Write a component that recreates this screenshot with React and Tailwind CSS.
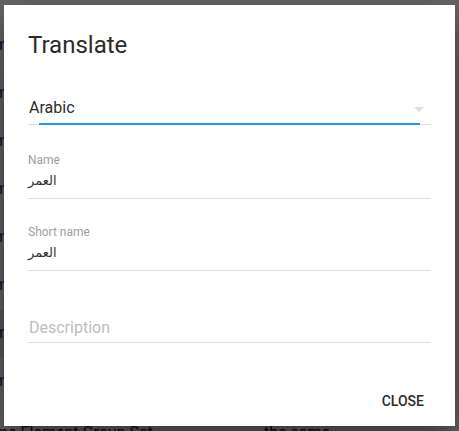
import React from "react";

const rows = [45, 93, 141, 189, 237, 285, 333, 381];

function Field({ label, value }) {
  return (
    <div className="flex flex-col">
      <div className="h-4 text-[12px] leading-4 text-[#9e9e9e]">{label}</div>
      <div
        className="mt-[1px] h-6 text-[13px] leading-6 text-[#333333]"
        dir="rtl"
        style={{ textAlign: "left" }}
      >
        <span style={{ fontFamily: '"DejaVu Sans", "Noto Sans", sans-serif' }}>{value}</span>
      </div>
      <div className="mt-[5px] h-px bg-[#e0e0e0]" />
    </div>
  );
}

export default function App() {
  return (
    <div
      className="relative w-[459px] h-[431px] overflow-hidden bg-white"
      style={{ fontFamily: 'Roboto, "Liberation Sans", sans-serif' }}
    >
      {/* background page */}
      <div className="absolute inset-0">
        {rows.map((y) => (
          <div
            key={y}
            className="absolute left-[-6px] text-[16px] leading-6 text-[#1a237e]"
            style={{ top: y - 12 }}
          >
            me
          </div>
        ))}
        <div className="absolute left-[-6px] top-[421px] text-[16px] leading-6 text-[#212121] whitespace-nowrap">
          me Element Group Set
        </div>
        <div className="absolute left-[264px] top-[421px] text-[16px] leading-6 text-[#212121] whitespace-nowrap">
          the same
        </div>
      </div>
      {/* overlay */}
      <div className="absolute inset-0 bg-black/60" />
      <div className="absolute left-0 top-[310px] w-[4px] h-[47px] bg-black/10" />

      {/* dialog */}
      <div className="absolute left-[4px] top-[5px] w-[451px] h-[421px] bg-white shadow-[0_19px_60px_rgba(0,0,0,0.3),0_15px_20px_rgba(0,0,0,0.22)] flex flex-col px-6 pt-6">
        <div className="text-[24px] leading-8 text-[#2b2b2b] font-normal">Translate</div>

        {/* select */}
        <div className="mt-[35px] flex flex-col">
          <div className="relative h-6 text-[16px] leading-6 text-[#2b2b2b]">
            <span className="pl-[1px]">Arabic</span>
            <svg
              className="absolute right-[7px] top-[11px]"
              width="10"
              height="5"
              viewBox="0 0 10 5"
            >
              <path d="M0 0 L10 0 L5 5 Z" fill="#e0e0e0" />
            </svg>
          </div>
          <div className="relative mt-[3px] h-[2px]">
            <div className="absolute left-0 right-0 bottom-0 h-px bg-[#e0e0e0]" />
            <div className="absolute left-[11px] right-[11px] top-0 h-[2px] bg-[#2196f3]" />
          </div>
        </div>

        <div className="mt-[27px]">
          <Field label="Name" value="العمر" />
        </div>
        <div className="mt-[25px]">
          <Field label="Short name" value="العمر" />
        </div>

        {/* description */}
        <div className="mt-[45px] flex flex-col">
          <div className="h-6 text-[16px] leading-6 text-[#bdbdbd] pl-[1px]">Description</div>
          <div className="mt-[2px] h-px bg-[#e0e0e0]" />
        </div>

        <div className="mt-auto mb-[15px] flex justify-end">
          <div className="mr-[7px] text-[14px] leading-5 font-medium text-[#2b2b2b]">CLOSE</div>
        </div>
      </div>
    </div>
  );
}
